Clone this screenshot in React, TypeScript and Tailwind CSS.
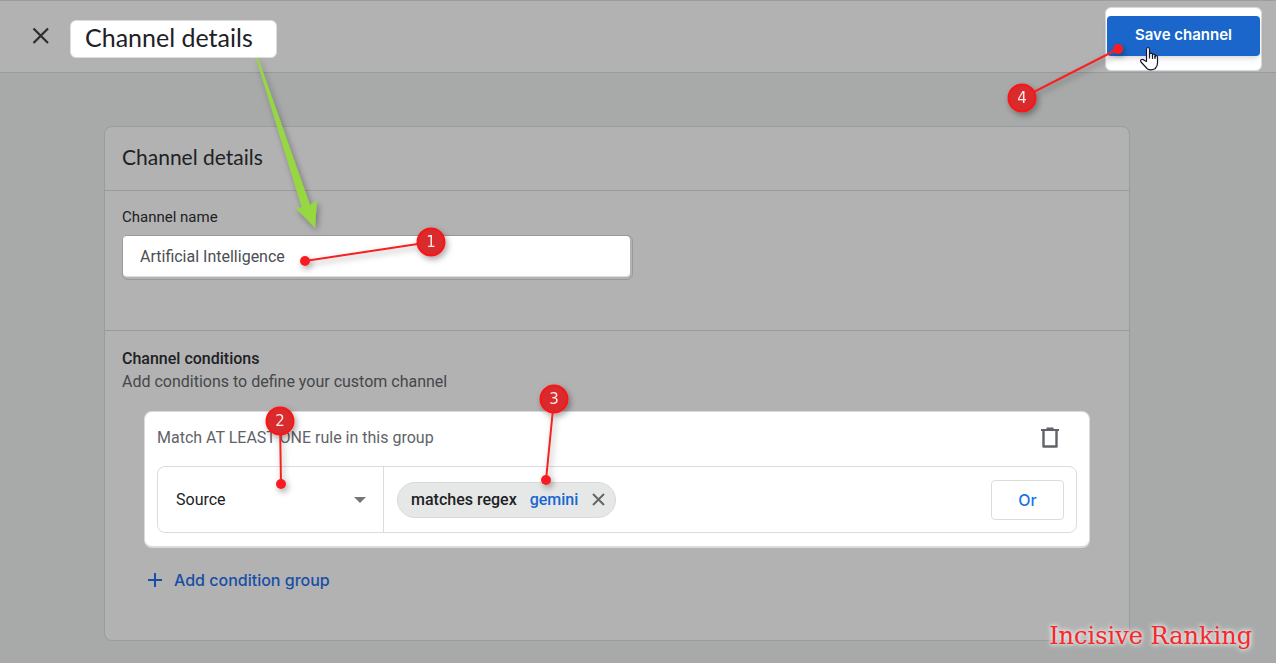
import { useState } from "react";

interface CalloutProps {
    label: string;
    cx: number;
    cy: number;
    dotX: number;
    dotY: number;
}

function Callout({ label, cx, cy, dotX, dotY }: CalloutProps) {
    return (
        <g filter="url(#shadow)">
            <line x1={cx} y1={cy} x2={dotX} y2={dotY} stroke="#f42222" strokeWidth="2" />
            <circle cx={dotX} cy={dotY} r="5" fill="#f81e20" />
            <circle cx={cx} cy={cy} r="13.5" fill="#d92a2d" stroke="#f81416" strokeWidth="2" />
            <text
                x={cx}
                y={cy + 5}
                textAnchor="middle"
                className="fill-[#ffeaea] text-[15px] font-['DejaVu_Sans',sans-serif]"
            >
                {label}
            </text>
        </g>
    );
}

function Annotations() {
    return (
        <svg
            className="absolute top-0 left-0 pointer-events-none"
            width="1276"
            height="663"
            viewBox="0 0 1276 663"
        >
            <defs>
                <filter id="shadow" x="0" y="0" width="1276" height="663" filterUnits="userSpaceOnUse">
                    <feDropShadow dx="2" dy="3" stdDeviation="3" floodColor="#000" floodOpacity="0.35" />
                </filter>
            </defs>
            <path
                d="M256 58 L258 58 L310 205 L317 200 L315 228 L295 207 L302 208 Z"
                fill="#95d83f"
                filter="url(#shadow)"
            />
            <Callout label="1" cx={431} cy={242} dotX={305} dotY={261} />
            <Callout label="2" cx={280} cy={421} dotX={281} dotY={484} />
            <Callout label="3" cx={554} cy={399} dotX={546} dotY={480} />
            <Callout label="4" cx={1022} cy={98} dotX={1118} dotY={49} />
            {/* Hand cursor */}
            <path
                d="M1146.5 61.5 V49.5 Q1146.5 47.5 1148 47.5 Q1149.5 47.5 1149.5 49.5 V55 V53.8 Q1151 52.5 1152.5 54 V56 V54.5 Q1154.2 53.5 1155 55 V57 V55.5 Q1157.5 55.2 1157.5 57.5 V63 Q1157.5 66 1155.5 68 V68.5 Q1151 71 1147.5 69 L1141 62 Q1140 60 1141.5 59.5 Q1143 59 1144.5 60.5 Z"
                fill="#fff"
                stroke="#15152d"
                strokeWidth="1.2"
                strokeLinejoin="round"
            />
            <path d="M1149.5 54 V58.5 M1152.5 55 V59 M1155 56 V59" stroke="#15152d" strokeWidth="1.2" />
        </svg>
    );
}

export default function App() {
    const [name, setName] = useState("Artificial Intelligence");
    const [dimension, setDimension] = useState("source");

    return (
        <div className="relative min-h-screen overflow-hidden bg-[#a8aaa9] text-[#202124] font-[Roboto,sans-serif]">
            {/* Header */}
            <header className="h-[73px] pl-8 pr-[14px] flex items-center bg-[#b2b2b2] border-y border-t-[#9c9ca3] border-b-[#999a9b]">
                <button type="button" aria-label="Close" className="mr-5 mb-[2px]">
                    <svg width="18" height="18" viewBox="0 0 18 18" fill="none" stroke="#2b2d2f" strokeWidth="2.2">
                        <path d="M1.5 1.5 L16 16 M16 1.5 L1.5 16" />
                    </svg>
                </button>
                <h1 className="mt-1 h-[38px] w-[207px] pl-[14px] bg-white rounded-md border border-[#dcdcdc] text-[25px] leading-8 whitespace-nowrap font-[Lato,sans-serif]">
                    Channel details
                </h1>
                <div className="ml-auto mt-1 w-[157px] h-16 px-px pt-2 bg-white rounded-md border border-[#d8d8d8]">
                    <button
                        type="button"
                        className="w-full h-10 rounded bg-[#1a66ca] text-white text-[15px] font-semibold shadow-md font-[Inter,sans-serif]"
                    >
                        Save channel
                    </button>
                </div>
            </header>

            {/* Card */}
            <main className="mt-[53px] mb-[23px] ml-[104px] mr-[146px] bg-[#b2b2b2] border border-[#999b9c] rounded-lg">
                <h2 className="h-16 pl-[17px] pb-1 flex items-center text-[21px] border-b border-[#999b9c] font-[Lato,sans-serif]">
                    Channel details
                </h2>

                <section className="pt-4 pb-[50px] px-[17px] border-b border-[#999b9c]">
                    <label htmlFor="channel-name" className="block text-[15px] leading-5">
                        Channel name
                    </label>
                    <div className="mt-2 h-[45px] max-w-[511px] pr-[2px] pb-[2px] border border-[#98999a] rounded-md">
                        <input
                            id="channel-name"
                            type="text"
                            value={name}
                            onChange={(e) => setName(e.target.value)}
                            className="block w-full h-full px-[17px] bg-white border-b border-[#dcdcdc] rounded text-base text-[#4b4e52] outline-none"
                        />
                    </div>
                </section>

                <section className="pt-4 pb-12 pl-[17px] pr-[39px]">
                    <h3 className="text-base font-medium leading-6">Channel conditions</h3>
                    <p className="text-base leading-[22px] text-[#45474a]">Add conditions to define your custom channel</p>

                    <div className="mt-[18px] ml-[22px] pt-[14px] pb-[13px] px-3 bg-white border border-[#d8dadb] border-b-2 rounded-lg">
                        <div className="h-6 flex items-center justify-between text-base text-[#5f6368]">
                            <span>Match AT LEAST ONE rule in this group</span>
                            <button type="button" aria-label="Delete group" className="mr-[18px]">
                                <svg width="18" height="22" viewBox="0 0 18 22" fill="none" stroke="#5f6368">
                                    <path d="M0 3 H18 M5.5 1.5 H12.5" strokeWidth="2" />
                                    <path d="M2.5 3 V19.5 H15.5 V3" strokeWidth="2.4" strokeLinejoin="round" />
                                </svg>
                            </button>
                        </div>

                        <div className="mt-4 h-[67px] flex items-center border border-[#dadce0] rounded-lg">
                            <div className="relative w-[226px] h-full shrink-0 border-r border-[#dadce0]">
                                <select
                                    aria-label="Dimension"
                                    value={dimension}
                                    onChange={(e) => setDimension(e.target.value)}
                                    className="w-full h-full pl-[18px] appearance-none bg-transparent text-base outline-none"
                                >
                                    <option value="source">Source</option>
                                </select>
                                <svg className="absolute right-[17px] top-[30px] pointer-events-none" width="12" height="6" viewBox="0 0 12 6">
                                    <path d="M0 0 H12 L6 6 Z" fill="#747679" />
                                </svg>
                            </div>
                            <div className="ml-[13px] h-9 w-[219px] pl-[13px] flex items-center text-base font-medium bg-[#e6e8e7] border border-[#d8dadb] rounded-full">
                                <span>matches regex</span>
                                <span className="ml-[13px] text-[#1967d2]">gemini</span>
                                <button type="button" aria-label="Remove rule" className="ml-[14px]">
                                    <svg width="13" height="13" viewBox="0 0 13 13" fill="none" stroke="#626568" strokeWidth="1.9">
                                        <path d="M1 1 L12 12 M12 1 L1 12" />
                                    </svg>
                                </button>
                            </div>
                            <button
                                type="button"
                                className="ml-auto mr-3 w-[73px] h-10 border border-[#dadce0] rounded text-base font-medium text-[#1a73e8] font-[Inter,sans-serif]"
                            >
                                Or
                            </button>
                        </div>
                    </div>

                    <button
                        type="button"
                        className="mt-5 ml-[26px] flex items-center gap-3 text-base leading-6 font-medium text-[#174ea6] font-[Inter,sans-serif]"
                    >
                        <svg width="14" height="14" viewBox="0 0 14 14" stroke="#174ea6" strokeWidth="2">
                            <path d="M0 7 H14 M7 0 V14" />
                        </svg>
                        Add condition group
                    </button>
                </section>
            </main>

            <div className="absolute right-6 bottom-3 text-2xl leading-8 whitespace-nowrap text-[#f5282c] font-['DejaVu_Serif',serif] [text-shadow:0_0_4px_#fff,0_0_6px_#eee]">
                Incisive Ranking
            </div>
            <Annotations />
        </div>
    );
}
